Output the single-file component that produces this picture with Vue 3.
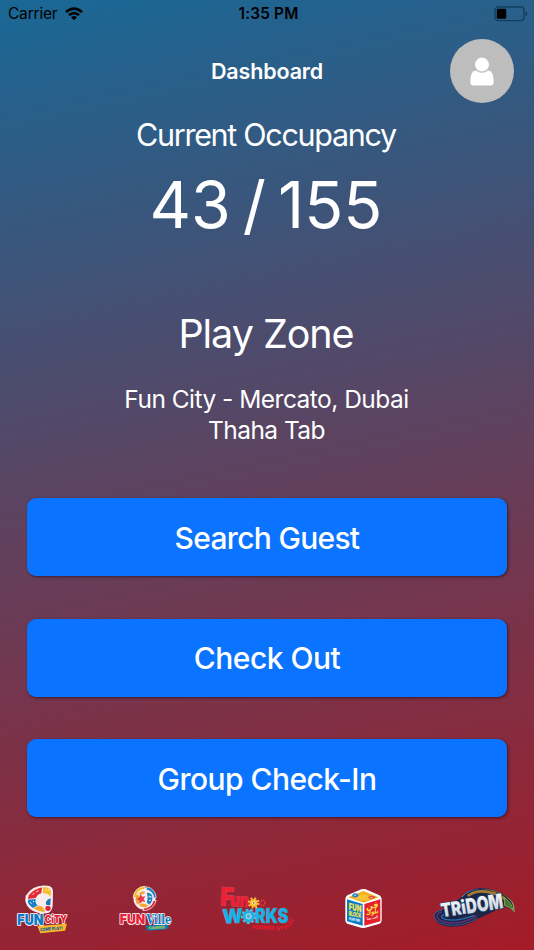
<template>
  <div class="dashboard">
    <!-- Status bar -->
    <div class="status-bar">
      <div class="status-bar__left">
        <span class="status-bar__carrier">Carrier</span>
        <svg class="status-bar__wifi" viewBox="0 0 18 13">
          <path d="M0 4.2Q9-3.6 18 4.2L16.2 6.1Q9-.2 1.8 6.1Z" />
          <path d="M3 7.3Q9 2.2 15 7.3L13.2 9.1Q9 5.7 4.8 9.1Z" />
          <path d="M6 10.3Q9 7.9 12 10.3L9 13.2Z" />
        </svg>
      </div>
      <span class="status-bar__time">1:35 PM</span>
      <svg class="status-bar__battery" viewBox="0 0 34 16">
        <rect x="1" y="1" width="29" height="13.6" rx="3" fill="none" stroke="#123f5e" stroke-width="1.3" />
        <rect x="2.8" y="2.8" width="9.4" height="10" rx="1" />
        <path d="M31.4 5.4Q33.4 6 33.4 7.8T31.4 10.2Z" fill="#123f5e" />
      </svg>
    </div>

    <!-- Header -->
    <header class="header">
      <h1 class="header__title">Dashboard</h1>
      <button class="header__avatar" aria-label="Profile">
        <svg viewBox="0 0 24 29">
          <path d="M5.5 13.6H18.5Q23.6 15 23.6 23V25.5Q23.6 28.5 20.6 28.5H3.4Q.4 28.5.4 25.5V23Q.4 15 5.5 13.6Z" fill="#fff" />
          <circle cx="12" cy="7.6" r="7.6" fill="#fff" stroke="#bdbdbd" stroke-width="1.2" />
        </svg>
      </button>
    </header>

    <!-- Occupancy -->
    <section class="occupancy">
      <h2 class="occupancy__label">Current Occupancy</h2>
      <p class="occupancy__value">{{ occupied }} / {{ capacity }}</p>
    </section>

    <!-- Zone -->
    <section class="zone">
      <h2 class="zone__title">Play Zone</h2>
      <p class="zone__place">Fun City - Mercato, Dubai</p>
      <p class="zone__device">Thaha Tab</p>
    </section>

    <!-- Actions -->
    <nav class="actions">
      <button v-for="item in actions" :key="item.key" class="actions__button" :class="'actions__button--' + item.key">
        <span>{{ item.label }}</span>
      </button>
    </nav>

    <!-- Brand logos -->
    <footer class="brands">
      <!-- Fun City -->
      <svg class="brand brand--city" viewBox="48 30 159 150">
        <path d="M77 62Q100 26 144 32Q160 35 159 51L158 92Q156 113 139 115Q112 118 90 102Q72 86 77 62Z" fill="#f8eef0" />
        <path d="M86 61Q102 42 126 37L124 55Q111 58 108 69L84 72Z" fill="#e22b35" />
        <path d="M129 37Q153 35 153 51L151 66Q145 54 129 55Z" fill="#f8bd27" />
        <path d="M84 74L107 72Q104 84 113 91L99 99Q81 87 84 74Z" fill="#1b80c8" />
        <path d="M152 70L151 91L138 89Q135 75 152 70Z" fill="#1a76bf" />
        <path d="M101 100L116 92Q127 91 133 104L135 111Q113 110 101 100Z" fill="#f5a928" />
        <circle cx="144" cy="100" r="8" fill="#dd2938" />
        <path d="M98 58l5-3m6-5 6-3M91 82l4 4m4-8 3 3M137 43l4 3m4-3 3 4" stroke="#fff" stroke-width="3" />
        <path d="M112 153L201 146L195 167L121 175Z" fill="#f8b72b" />
        <g class="outline">
          <text x="52" y="151" textLength="78" lengthAdjust="spacingAndGlyphs" font-size="42" fill="#087bc8">FUN</text>
          <text x="134" y="145" textLength="67" lengthAdjust="spacingAndGlyphs" font-size="33" fill="#e42135">CiTY</text>
        </g>
        <text x="121" y="169" textLength="68" lengthAdjust="spacingAndGlyphs" font-size="13" fill="#17649a" transform="rotate(-5 121 169)">COME PLAY!</text>
      </svg>

      <!-- Fun Ville -->
      <svg class="brand brand--ville" viewBox="55 30 164 150">
        <circle cx="134" cy="71" r="33" fill="#f9eff0" />
        <path d="M100 68A35 35 0 0 1 136 34L135 43Q110 44 109 68Z" fill="#f7ba2a" stroke="#fff" stroke-width="2" />
        <path d="M140 35A34 34 0 0 1 169 67L162 70Q161 49 139 44Z" fill="#1680c6" stroke="#fff" stroke-width="2" />
        <path d="M111 58L119 62Q125 74 120 83L113 90Q102 74 111 58Z" fill="#f3a13a" />
        <path d="M117 55Q126 46 136 50L133 57Q126 56 122 61Z" fill="#f6a52b" />
        <path d="M141 53Q155 52 157 64Q160 79 149 89L141 83Q146 69 141 53Z" fill="#1c82c4" />
        <path d="M117 91L126 85L138 88L146 92Q131 102 117 91Z" fill="#f6a52b" />
        <path d="M169 76Q162 106 130 107L132 99Q155 98 160 77Z" fill="#de2b3a" stroke="#fff" stroke-width="2" />
        <path d="M122 56l5 9 10-1-6 8 6 9-10-2-7 8-1-11-9-4 10-5Z" fill="#e73741" />
        <path d="M148 62v5m5-4v5m-5 9 5-2" stroke="#fff" stroke-width="3" />
        <path d="M137 152L202 148L207 159L199 163L143 167Z" fill="#087fb4" />
        <g class="outline">
          <text x="60" y="148" textLength="76" lengthAdjust="spacingAndGlyphs" font-size="41" fill="#e6223b">FUN</text>
          <text class="serif" x="140" y="147" textLength="74" lengthAdjust="spacingAndGlyphs" font-size="36" fill="#087bc4">Ville</text>
        </g>
        <text x="147" y="163" textLength="49" lengthAdjust="spacingAndGlyphs" font-size="11" fill="#b7cf44" transform="rotate(-3 147 163)">FUN INSIDE!</text>
      </svg>

      <!-- Fun Works -->
      <svg class="brand brand--works" viewBox="40 30 237 150">
        <g class="hairline">
          <g fill="#ee2032">
            <text x="45" y="91" textLength="40" lengthAdjust="spacingAndGlyphs" font-size="76" transform="rotate(4 45 91)">F</text>
            <text x="76" y="93" textLength="56" lengthAdjust="spacingAndGlyphs" font-size="56" transform="rotate(3 76 93)">un</text>
          </g>
          <g fill="#12b4e7">
            <text x="54" y="146" textLength="62" lengthAdjust="spacingAndGlyphs" font-size="60" transform="rotate(-3 54 146)">W</text>
            <text x="151" y="145" textLength="100" lengthAdjust="spacingAndGlyphs" font-size="60">RKS</text>
          </g>
        </g>
        <circle class="gear" cx="147" cy="84" r="14" stroke="#f8bc35" stroke-dasharray="5.5 5.5" />
        <circle cx="147" cy="84" r="12" fill="#f8bc35" />
        <circle cx="147" cy="84" r="4" fill="#a8602f" stroke="#fff0b3" stroke-width="3" />
        <circle class="gear gear--small" cx="173" cy="84" r="8" stroke="#e63841" stroke-dasharray="4 2.3" />
        <circle cx="173" cy="84" r="4" fill="#94273a" />
        <circle cx="132" cy="124" r="20" fill="none" stroke="#3fc0ea" stroke-width="6" stroke-dasharray="9 5" />
        <circle cx="132" cy="124" r="17" fill="#18b0e3" stroke="#5ac9ec" stroke-width="2" />
        <circle cx="132" cy="124" r="8" fill="#4fb4d4" stroke="#b9e8f3" stroke-width="3" />
        <g fill="#e51a2a">
          <text x="141" y="162" textLength="68" lengthAdjust="spacingAndGlyphs" font-size="17" transform="rotate(3 141 162)">POWERED</text>
          <text x="216" y="167" textLength="20" lengthAdjust="spacingAndGlyphs" font-size="17" transform="rotate(-8 216 167)">BY</text>
          <text x="245" y="164" textLength="37" lengthAdjust="spacingAndGlyphs" font-size="17" transform="rotate(-50 245 164)">PLAY</text>
        </g>
      </svg>

      <!-- Fun Block -->
      <svg class="brand brand--block" viewBox="75 30 115 150">
        <path d="M126 43Q132 41 139 43L180 61Q187 65 187 73V136Q187 143 181 146L138 158Q132 160 125 158L84 146Q78 143 78 136V73Q78 65 84 61Z" fill="#fff" />
        <path d="M87 67L132 48L178 67L133 83Z" fill="#f3ad22" />
        <path d="M101 69L132 56L165 69L132 78Z" fill="#fbc238" />
        <path d="M83 73L130 87V152L83 139Z" fill="#087dc6" />
        <path d="M135 87L183 73V139L135 152Z" fill="#e3202d" />
        <ellipse cx="108" cy="61" rx="9" ry="6" fill="#1a83c5" />
        <ellipse cx="157" cy="67" rx="10" ry="5" fill="#dd4930" />
        <path d="M103 59l4 4 4-5M151 66l5 3 5-3" fill="none" stroke="#e8f4e8" stroke-width="2" />
        <g transform="matrix(1 .2 0 1 0 -18)" fill="#ffe545">
          <text x="88" y="105" textLength="38" lengthAdjust="spacingAndGlyphs" font-size="29">FUN</text>
          <text x="88" y="122" textLength="38" lengthAdjust="spacingAndGlyphs" font-size="20">BLOCK</text>
          <text x="90" y="135" textLength="32" lengthAdjust="spacingAndGlyphs" font-size="12" fill="#fff">PLAY ON!</text>
        </g>
        <g class="arabic" transform="matrix(1 -.2 0 1 0 29)" fill="#ffe545">
          <text x="141" y="103" textLength="36" lengthAdjust="spacingAndGlyphs" font-size="25">فن</text>
          <text x="141" y="120" textLength="36" lengthAdjust="spacingAndGlyphs" font-size="22">بلوك</text>
          <text x="143" y="135" textLength="32" lengthAdjust="spacingAndGlyphs" font-size="11" fill="#fff">العب معنا</text>
        </g>
      </svg>

      <!-- Tridom -->
      <svg class="brand brand--tridom" viewBox="27 30 249 150">
        <defs>
          <linearGradient id="swoosh" x1="0" x2="1">
            <stop offset="0" stop-color="#4e99d3" />
            <stop offset=".35" stop-color="#173770" />
            <stop offset=".6" stop-color="#a87538" />
            <stop offset=".8" stop-color="#3a4a32" />
            <stop offset="1" stop-color="#a9d25a" />
          </linearGradient>
          <linearGradient id="steel" x1="0" y1="0" x2="0" y2="1">
            <stop offset="0" stop-color="#fff" />
            <stop offset="1" stop-color="#c2c8d2" />
          </linearGradient>
        </defs>
        <path d="M54 105Q27 110 31 126Q38 156 91 155Q127 154 160 132L239 95Q262 98 270 113Q277 86 248 64Q208 36 165 40Q133 43 114 66L78 89Z" fill="#1c2545" />
        <path d="M54 105Q27 110 31 126Q39 150 91 151Q130 149 159 129" fill="none" stroke="#4673ad" stroke-width="2" />
        <path d="M53 111Q33 117 41 129Q52 144 91 144Q130 142 158 122" fill="none" stroke="#5f3278" stroke-width="4" />
        <path d="M60 119Q43 126 64 133Q98 141 151 121" fill="none" stroke="#286eb0" stroke-width="4" />
        <path d="M114 66Q134 41 176 42Q234 46 263 79Q272 92 270 111" fill="none" stroke="url(#swoosh)" stroke-width="3" />
        <path d="M131 63Q157 43 197 52Q225 57 243 72" fill="none" stroke="#a47a35" stroke-width="8" />
        <path d="M241 68Q264 82 267 106Q257 95 242 92Z" fill="#47772f" stroke="#a9c24d" stroke-width="2" />
        <g class="tridom-word" transform="rotate(-9 54 127)" fill="url(#steel)">
          <text x="54" y="127" textLength="75" lengthAdjust="spacingAndGlyphs" font-size="57">TRi</text>
          <text x="130" y="128" textLength="112" lengthAdjust="spacingAndGlyphs" font-size="62">DOM</text>
        </g>
      </svg>
    </footer>
  </div>
</template>

<script setup>
import { ref } from 'vue'

const occupied = ref(43)
const capacity = ref(155)

const actions = [
  { key: 'search', label: 'Search Guest' },
  { key: 'checkout', label: 'Check Out' },
  { key: 'group', label: 'Group Check-In' }
]
</script>

<style>
body {
  margin: 0;
}
</style>

<style scoped>
.dashboard {
  display: flex;
  flex-direction: column;
  width: 534px;
  height: 950px;
  overflow: hidden;
  box-sizing: border-box;
  font-family: Inter, "Liberation Sans", sans-serif;
  color: #fff;
  text-align: center;
  background: linear-gradient(168deg, #196896 0%, #a51b27 100%);
}

h1, h2, p {
  margin: 0;
  font-weight: 400;
}

button {
  border: 0;
  padding: 0;
  font-family: inherit;
  color: inherit;
}

.status-bar {
  display: grid;
  grid-template-columns: 1fr auto 1fr;
  align-items: center;
  height: 27px;
  padding: 0 6px 0 8px;
  color: #000;
  font-size: 15.5px;
}

.status-bar__left {
  display: flex;
  align-items: center;
  gap: 8px;
}

.status-bar__carrier {
  letter-spacing: -0.2px;
}

.status-bar__wifi {
  width: 18px;
  height: 13px;
}

.status-bar__time {
  padding-left: 1px;
  font-weight: 600;
  font-size: 15.3px;
  letter-spacing: 0.2px;
}

.status-bar__battery {
  width: 34px;
  height: 16px;
  justify-self: end;
}

.header {
  display: grid;
  grid-template-columns: 1fr auto 1fr;
  align-items: center;
  height: 64px;
  margin-top: 12px;
  padding: 0 20px;
}

.header__title {
  grid-column: 2;
  font-size: 21.5px;
  font-weight: 600;
  letter-spacing: -0.15px;
}

.header__avatar {
  display: flex;
  align-items: center;
  justify-content: center;
  justify-self: end;
  width: 64px;
  height: 64px;
  border-radius: 50%;
  background: #bdbdbd;
}

.header__avatar svg {
  width: 24px;
  height: 29px;
}

.occupancy {
  margin-top: 12px;
}

.occupancy__label {
  padding-right: 2px;
  font-size: 30.5px;
  line-height: 40px;
  letter-spacing: -1.3px;
}

.occupancy__value {
  margin-top: 10px;
  padding-right: 2px;
  font-size: 64.3px;
  line-height: 80px;
  word-spacing: -6px;
}

.zone {
  margin-top: 64px;
}

.zone__title {
  padding-right: 2px;
  font-size: 39.5px;
  line-height: 50px;
  letter-spacing: -1.05px;
}

.zone__place {
  margin-top: 25px;
  padding-right: 1px;
  font-size: 24.5px;
  line-height: 31px;
  letter-spacing: -0.52px;
}

.zone__device {
  padding-right: 1px;
  font-size: 24.5px;
  line-height: 31px;
  letter-spacing: -0.55px;
}

.actions {
  display: flex;
  flex-direction: column;
  gap: 42.5px;
  margin-top: 52px;
  padding: 0 27px;
}

.actions__button {
  height: 78px;
  padding-top: 1px;
  border-radius: 9px;
  background: #0a73ff;
  box-shadow: 1px 1px 3px rgba(0, 0, 0, 0.5);
  font-size: 30px;
  font-weight: 500;
  letter-spacing: -0.7px;
}

.actions__button--checkout {
  letter-spacing: -0.5px;
}

.actions__button--group {
  letter-spacing: -0.55px;
}

.brands {
  display: flex;
  margin-top: 68px;
  padding-left: 16px;
}

.brand {
  height: 50px;
  overflow: visible;
  font-family: Inter, "DejaVu Sans", sans-serif;
  font-weight: 900;
}

.brand--city {
  width: 53px;
}

.brand--ville {
  width: 55px;
  margin-left: 49px;
}

.brand--works {
  width: 79px;
  margin-left: 45px;
}

.brand--block {
  width: 39px;
  margin-left: 46.5px;
}

.brand--tridom {
  width: 83px;
  margin-left: 50.5px;
}

.outline {
  stroke: #fff;
  stroke-width: 5;
  stroke-linejoin: round;
  paint-order: stroke;
}

.hairline text {
  stroke: #c9596c;
  stroke-width: 2;
  stroke-linejoin: round;
  paint-order: stroke;
}

.serif {
  font-family: "DejaVu Serif", serif;
}

.arabic {
  font-family: "DejaVu Sans", sans-serif;
}

.tridom-word {
  stroke: #1b4272;
  stroke-width: 4;
  stroke-linejoin: round;
  paint-order: stroke;
}

.gear {
  fill: none;
  stroke-width: 7;
}

.gear--small {
  stroke-width: 5;
}
</style>
